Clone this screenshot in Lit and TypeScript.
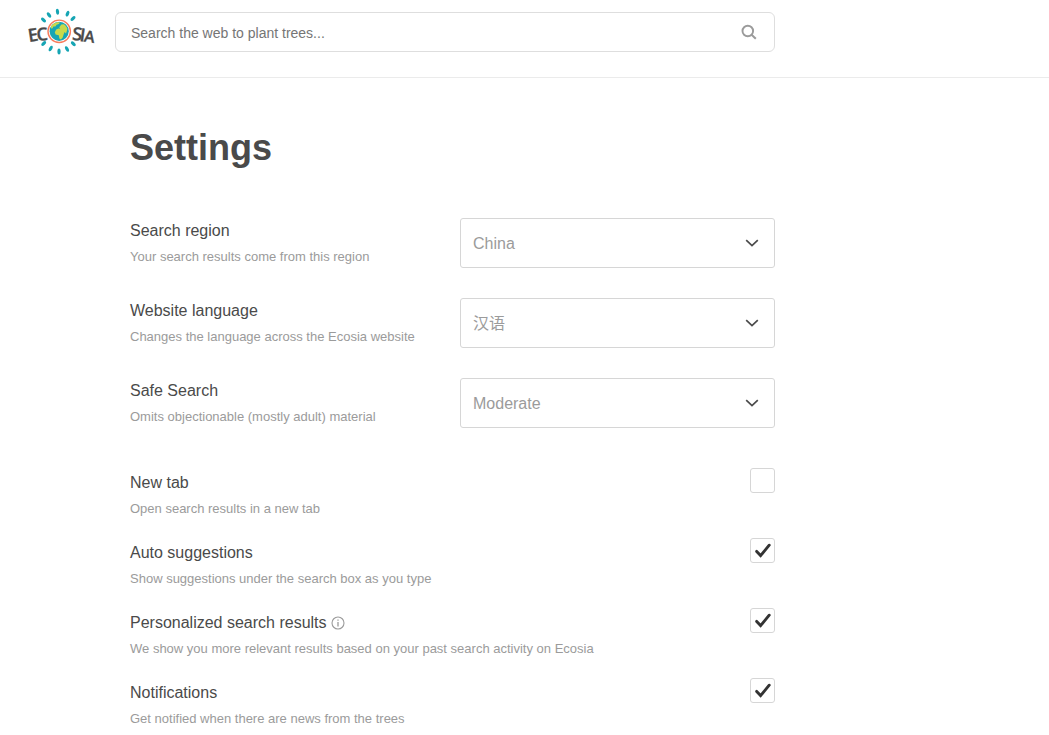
import { LitElement, html, css, svg, nothing } from "lit";
import { customElement, property, state } from "lit/decorators.js";

@customElement("ecosia-logo")
class EcosiaLogo extends LitElement {
  static styles = css`
    :host { display: block; }
    .logo { display: block; width: 70px; height: 48px; overflow: visible; }
    .word {
      font-family: "Open Sans", sans-serif;
      font-weight: 600;
      font-size: 18px;
      fill: #4a4a4a;
      stroke: #4a4a4a;
      stroke-width: 0.3px;
    }
    .last { font-size: 16px; }
  `;

  private rays = [
    [15.5, 12, -50], [21, 7, -35], [29.5, 3.7, -5], [39.5, 5.7, 25], [45, 10.5, 50],
    [15.7, 35.5, 48], [22.7, 40.5, 28], [31, 43.5, 0], [39, 41, -28], [45.3, 35.7, -48],
  ];

  render() {
    return html`
      <svg class="logo" viewBox="0 0 70 48" role="img" aria-label="Ecosia">
        ${this.rays.map(([x, y, a]) => svg`
          <ellipse cx=${x} cy=${y} rx="1.6" ry="3" fill="#16a5b4" transform="rotate(${a} ${x} ${y})"></ellipse>`)}
        <g class="word">
          <text transform="translate(1 34) rotate(-9)">E</text>
          <text transform="translate(9 33) rotate(-5)">C</text>
          <text transform="translate(43.8 31.8) rotate(6)">S</text>
          <text transform="translate(51 33) rotate(8)">I</text>
          <text class="last" transform="translate(55.4 33.6) rotate(8)">A</text>
        </g>
        <circle cx="31.2" cy="23.3" r="11.2" fill="#fff" stroke="#f87c5c" stroke-width="1.4"></circle>
        <circle cx="31.2" cy="23.3" r="9.6" fill="#16a5b4"></circle>
        <path fill="#c8d94b" d="M23.2 17.8Q25.6 14.7 29.4 14.2L32 14.6 30.8 16 28.6 16.8 27.4 18.6 25.4 18.4 24.6 20.2 23 20.4Z"></path>
        <path fill="#c8d94b" d="M33.4 16.4l2.6-.2q2.6 1.9 3.4 4.4l-.6 2.6-.8 2.2-1.4-1.4-1 2.4-1 3.4-1.8 1.8-1.4-1-.6-3.4-3.2-.6-.8-2.4 1.4-2.8 2.2-.8 1.8.2-1-1.6z"></path>
      </svg>
    `;
  }
}

interface ChoiceSetting {
  id: string;
  label: string;
  hint: string;
  value: string;
  options: string[];
}

interface ToggleSetting {
  id: string;
  label: string;
  hint: string;
  checked: boolean;
  info?: boolean;
}

@customElement("setting-select")
class SettingSelect extends LitElement {
  @property({ attribute: false }) setting!: ChoiceSetting;

  static styles = css`
    :host { display: block; }
    .row {
      display: grid;
      grid-template-columns: minmax(0, 1fr) minmax(0, 315px);
      column-gap: 15px;
    }
    .label { display: block; font-size: 16px; line-height: 26px; color: #4a4a4a; }
    .hint { margin: 4px 0 0; font-size: 13px; line-height: 18px; color: #9b9b9b; }
    .field { display: grid; align-items: center; }
    .select {
      grid-area: 1 / 1;
      appearance: none;
      box-sizing: border-box;
      width: 100%;
      height: 50px;
      padding: 0 40px 0 12px;
      border: 1px solid #d6d6d6;
      border-radius: 3px;
      background: #fff;
      color: #9b9b9b;
      font: 16px "Liberation Sans", "Noto Sans CJK SC", sans-serif;
    }
    .chevron {
      grid-area: 1 / 1;
      justify-self: end;
      width: 14px;
      height: 8px;
      margin-right: 16px;
      pointer-events: none;
    }
  `;

  render() {
    const s = this.setting;
    return html`
      <div class="row">
        <div>
          <label class="label" for=${s.id}>${s.label}</label>
          <p class="hint">${s.hint}</p>
        </div>
        <div class="field">
          <select class="select" id=${s.id}>
            ${s.options.map((o) => html`<option ?selected=${o === s.value}>${o}</option>`)}
          </select>
          <svg class="chevron" viewBox="0 0 14 8" aria-hidden="true">
            <path d="M1.2 1.2L7 6.6l5.8-5.4" fill="none" stroke="#4a4a4a" stroke-width="1.7"></path>
          </svg>
        </div>
      </div>
    `;
  }
}

@customElement("setting-toggle")
class SettingToggle extends LitElement {
  @property({ attribute: false }) setting!: ToggleSetting;

  static styles = css`
    :host { display: block; }
    .row { display: flex; justify-content: space-between; align-items: flex-start; gap: 15px; }
    .text { padding-top: 2px; }
    .heading { display: flex; align-items: center; gap: 4px; }
    .label { font-size: 16px; line-height: 26px; color: #4a4a4a; }
    .hint { margin: 4px 0 0; font-size: 13px; line-height: 18px; color: #9b9b9b; }
    .info { display: block; padding: 0; border: 0; background: none; height: 14px; cursor: pointer; }
    .info-icon { display: block; width: 14px; height: 14px; }
    .box { display: grid; place-items: center; flex: none; }
    .check {
      grid-area: 1 / 1;
      appearance: none;
      box-sizing: border-box;
      width: 25px;
      height: 25px;
      margin: 0;
      border: 1px solid #d6d6d6;
      border-radius: 3px;
      background: #fff;
    }
    .tick { grid-area: 1 / 1; width: 17px; height: 15px; pointer-events: none; visibility: hidden; }
    .check:checked + .tick { visibility: visible; }
  `;

  render() {
    const s = this.setting;
    return html`
      <div class="row">
        <div class="text">
          <div class="heading">
            <label class="label" for=${s.id}>${s.label}</label>
            ${s.info
              ? html`<button class="info" type="button" aria-label="More information">
                  <svg class="info-icon" viewBox="0 0 14 14" aria-hidden="true">
                    <circle cx="7" cy="7" r="6" fill="none" stroke="#9b9b9b" stroke-width="1.1"></circle>
                    <path d="M7 6v4.4M7 3.5v1.3" stroke="#9b9b9b" stroke-width="1.3"></path>
                  </svg>
                </button>`
              : nothing}
          </div>
          <p class="hint">${s.hint}</p>
        </div>
        <div class="box">
          <input class="check" type="checkbox" id=${s.id} ?checked=${s.checked} />
          <svg class="tick" viewBox="0 0 17 15" aria-hidden="true">
            <path d="M2.7 8.4L6.6 12.6 15.2 2.2" fill="none" stroke="#333" stroke-width="2.9" stroke-linecap="round"></path>
          </svg>
        </div>
      </div>
    `;
  }
}

@customElement("app-root")
class AppRoot extends LitElement {
  @state() private choices: ChoiceSetting[] = [
    { id: "region", label: "Search region", hint: "Your search results come from this region", value: "China", options: ["China"] },
    { id: "language", label: "Website language", hint: "Changes the language across the Ecosia website", value: "汉语", options: ["汉语"] },
    { id: "safe", label: "Safe Search", hint: "Omits objectionable (mostly adult) material", value: "Moderate", options: ["Moderate"] },
  ];

  @state() private toggles: ToggleSetting[] = [
    { id: "newtab", label: "New tab", hint: "Open search results in a new tab", checked: false },
    { id: "suggest", label: "Auto suggestions", hint: "Show suggestions under the search box as you type", checked: true },
    { id: "personal", label: "Personalized search results", hint: "We show you more relevant results based on your past search activity on Ecosia", checked: true, info: true },
    { id: "notify", label: "Notifications", hint: "Get notified when there are news from the trees", checked: true },
  ];

  static styles = css`
    :host {
      display: block;
      background: #fff;
      color: #4a4a4a;
      font-family: "Liberation Sans", "Noto Sans CJK SC", sans-serif;
    }
    .header {
      display: flex;
      align-items: flex-start;
      gap: 17px;
      padding: 8px 28px 21px;
      border-bottom: 1px solid #ebebeb;
    }
    .home { display: block; flex: none; }
    .search {
      box-sizing: border-box;
      display: flex;
      align-items: center;
      flex: 0 1 660px;
      height: 40px;
      margin-top: 4px;
      padding: 0 17px 0 15px;
      border: 1px solid #dedede;
      border-radius: 6px;
    }
    .query {
      flex: 1;
      min-width: 0;
      padding: 2px 0 0;
      border: 0;
      outline: 0;
      background: none;
      color: #4a4a4a;
      font: 14px "Liberation Sans", sans-serif;
    }
    .query::placeholder { color: #757575; opacity: 1; }
    .submit { display: block; padding: 0; border: 0; background: none; cursor: pointer; }
    .glass { display: block; width: 16px; height: 16px; }
    .main { max-width: 645px; padding: 48px 28px 0 130px; }
    .title { margin: 0 0 48px; font-size: 36px; line-height: 44px; font-weight: 700; }
    .choices { display: grid; gap: 30px; margin-bottom: 40px; }
    .toggles { display: grid; gap: 20px; }
  `;

  render() {
    return html`
      <header class="header">
        <a class="home" href="/" aria-label="Ecosia home"><ecosia-logo></ecosia-logo></a>
        <form class="search" role="search" @submit=${(e: Event) => e.preventDefault()}>
          <input class="query" type="text" aria-label="Search" placeholder="Search the web to plant trees..." />
          <button class="submit" type="submit" aria-label="Search">
            <svg class="glass" viewBox="0 0 16 16" aria-hidden="true">
              <circle cx="6.8" cy="7" r="5.3" fill="none" stroke="#9b9b9b" stroke-width="1.9"></circle>
              <path d="M10.6 10.8L14.8 14.8" stroke="#9b9b9b" stroke-width="2"></path>
            </svg>
          </button>
        </form>
      </header>
      <main class="main">
        <h1 class="title">Settings</h1>
        <div class="choices">
          ${this.choices.map((c) => html`<setting-select .setting=${c}></setting-select>`)}
        </div>
        <div class="toggles">
          ${this.toggles.map((t) => html`<setting-toggle .setting=${t}></setting-toggle>`)}
        </div>
      </main>
    `;
  }
}
